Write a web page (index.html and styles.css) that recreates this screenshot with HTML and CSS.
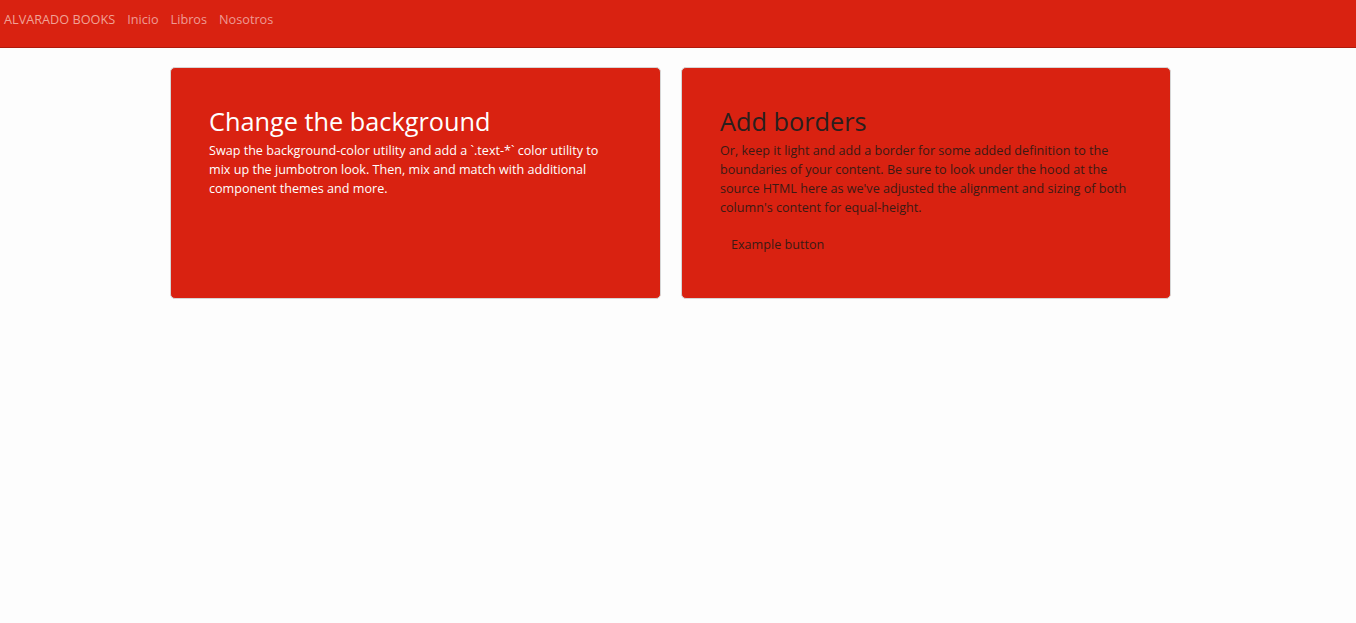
FILE: index.html
```html
<!DOCTYPE html>
<html lang="es">
<head>
<meta charset="utf-8">
<title>Alvarado Books</title>
<link rel="stylesheet" href="styles.css">
</head>
<body>
<nav class="navbar">
  <a class="brand" href="#">ALVARADO BOOKS</a>
  <a class="nav-link" href="#">Inicio</a>
  <a class="nav-link" href="#">Libros</a>
  <a class="nav-link" href="#">Nosotros</a>
</nav>
<main class="container">
  <section class="card card-light">
    <h2 class="card-title">Change the background</h2>
    <p class="card-text">Swap the background-color utility and add a `.text-*` color utility to mix up the jumbotron look. Then, mix and match with additional component themes and more.</p>
  </section>
  <section class="card card-dark">
    <h2 class="card-title">Add borders</h2>
    <p class="card-text">Or, keep it light and add a border for some added definition to the boundaries of your content. Be sure to look under the hood at the source HTML here as we've adjusted the alignment and sizing of both column's content for equal-height.</p>
    <button class="btn" type="button">Example button</button>
  </section>
</main>
</body>
</html>
```
FILE: styles.css
```css
* { box-sizing: border-box; }
html, body { margin: 0; padding: 0; }
body {
  background: #fdfdfd;
  font-family: "Open Sans", "Liberation Sans", sans-serif;
  font-size: 12.6px;
  color: #212529;
}
.navbar {
  height: 48px;
  background: #d92211;
  border-bottom: 1px solid #b01a0c;
  display: flex;
  align-items: flex-start;
  padding: 10px 4px 0;
  gap: 12px;
}
.navbar a {
  text-decoration: none;
  font-size: 12.7px;
  line-height: 19px;
  color: #ee9b94;
}
.navbar .brand { color: #f0a296; }
.container {
  width: 1016px;
  margin: 19px auto 0;
  padding-right: 15px;
  display: grid;
  grid-template-columns: 491px 490px;
  gap: 20px;
}
.card {
  background: #d92211;
  border: 1px solid #d6d6d6;
  border-radius: 5px;
  height: 232px;
  padding: 37px 41px 37px 38px;
}
.card-title {
  margin: 0 0 3px;
  font-weight: 400;
  font-size: 25.3px;
  line-height: 33px;
}
.card-text {
  margin: 0;
  font-size: 12.6px;
  line-height: 19px;
}
.card-light { color: #ffffff; }
.card-dark .card-title { color: #2a1f1d; }
.card-dark .card-text { color: #3b1a14; }
.btn {
  margin-top: 14px;
  background: transparent;
  border: 0;
  padding: 4px 11px;
  font-family: inherit;
  font-size: 12.6px;
  line-height: 19px;
  color: #3b1a14;
}
```
